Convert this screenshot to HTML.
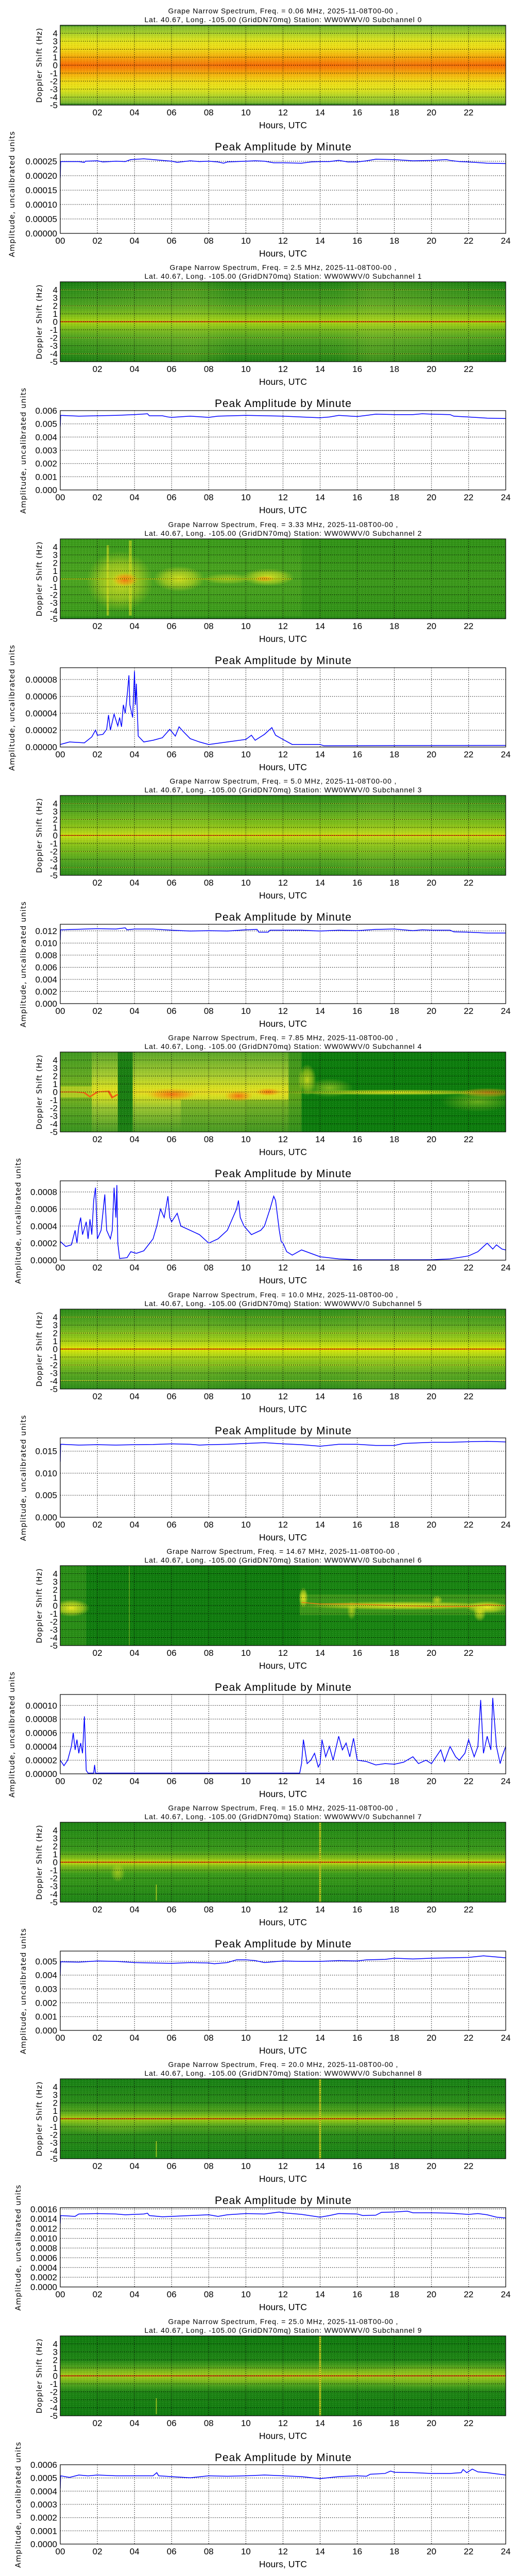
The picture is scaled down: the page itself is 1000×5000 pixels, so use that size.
<!DOCTYPE html>
<html><head><meta charset="utf-8"><style>
html,body{margin:0;padding:0;background:#fff}
body{width:1000px;height:5000px;position:relative;overflow:hidden}
svg.p{position:absolute;left:0}
.t{font-family:"Liberation Sans",sans-serif;font-size:14px;text-anchor:middle;fill:#000}
.k{font-family:"Liberation Sans",sans-serif;font-size:17px;fill:#000}
.e{text-anchor:end}.m{text-anchor:middle}
.h{font-family:"Liberation Sans",sans-serif;font-size:17.5px;text-anchor:middle;fill:#000}
.pa{font-family:"Liberation Sans",sans-serif;font-size:21px;text-anchor:middle;fill:#000}
.yl{font-family:"DejaVu Sans",sans-serif;font-size:14.5px;text-anchor:middle;fill:#000}
.gr{fill:none;stroke:#000;stroke-width:1;stroke-dasharray:1.5 2.5}
.fr{fill:none;stroke:#000;stroke-width:1.2}
.ln{fill:none;stroke:#0000ff;stroke-width:1.5}
</style></head><body>

<svg width="0" height="0" style="position:absolute">
<defs>
<pattern id="nz" width="6" height="4" patternUnits="userSpaceOnUse"><rect width="2" height="1" fill="#000" opacity=".09"/><rect x="3" y="2" width="2" height="1" fill="#fff" opacity=".09"/><rect x="1" y="3" width="1" height="1" fill="#000" opacity=".07"/><rect x="5" y="0" width="1" height="2" fill="#fff" opacity=".05"/></pattern>
<radialGradient id="ry"><stop offset="0" stop-color="#ecea20" stop-opacity="1"/><stop offset=".6" stop-color="#d8e020" stop-opacity=".6"/><stop offset="1" stop-color="#c8d820" stop-opacity="0"/></radialGradient>
<radialGradient id="ro"><stop offset="0" stop-color="#f47010" stop-opacity="1"/><stop offset=".6" stop-color="#f49a10" stop-opacity=".6"/><stop offset="1" stop-color="#f0c010" stop-opacity="0"/></radialGradient>
<radialGradient id="rg"><stop offset="0" stop-color="#8cc020" stop-opacity=".9"/><stop offset="1" stop-color="#8cc020" stop-opacity="0"/></radialGradient>
<linearGradient id="g0" x1="0" y1="0" x2="0" y2="1"><stop offset="0" stop-color="#106e10"/><stop offset=".02" stop-color="#7cb830"/><stop offset=".1" stop-color="#a8d028"/><stop offset=".2" stop-color="#e4e41a"/><stop offset=".3" stop-color="#f0d814"/><stop offset=".4" stop-color="#f6a808"/><stop offset=".5" stop-color="#f86a04"/><stop offset=".6" stop-color="#f6a808"/><stop offset=".7" stop-color="#f0d814"/><stop offset=".8" stop-color="#e4e41a"/><stop offset=".9" stop-color="#a8d028"/><stop offset=".97" stop-color="#7cb830"/><stop offset="1" stop-color="#106e10"/></linearGradient>
<linearGradient id="g1" x1="0" y1="0" x2="0" y2="1"><stop offset="0" stop-color="#157a10"/><stop offset=".1" stop-color="#2a8a18"/><stop offset=".3" stop-color="#4aa020"/><stop offset=".42" stop-color="#7cbc18"/><stop offset=".5" stop-color="#a8d410"/><stop offset=".58" stop-color="#7cbc18"/><stop offset=".7" stop-color="#4aa020"/><stop offset=".9" stop-color="#2a8a18"/><stop offset="1" stop-color="#157a10"/></linearGradient>
<linearGradient id="g2" x1="0" y1="0" x2="0" y2="1"><stop offset="0" stop-color="#3a9a1a"/><stop offset=".5" stop-color="#4ca420"/><stop offset=".96" stop-color="#3a9a1a"/><stop offset="1" stop-color="#1a7a10"/></linearGradient>
<linearGradient id="g3" x1="0" y1="0" x2="0" y2="1"><stop offset="0" stop-color="#2a8a18"/><stop offset=".15" stop-color="#4aa020"/><stop offset=".35" stop-color="#7cbc18"/><stop offset=".45" stop-color="#a8d018"/><stop offset=".5" stop-color="#c8e010"/><stop offset=".55" stop-color="#a8d018"/><stop offset=".65" stop-color="#7cbc18"/><stop offset=".85" stop-color="#4aa020"/><stop offset="1" stop-color="#2a8a18"/></linearGradient>
<linearGradient id="g4" x1="0" y1="0" x2="0" y2="1"><stop offset="0" stop-color="#5aa628"/><stop offset=".3" stop-color="#a8cc30"/><stop offset=".45" stop-color="#d8e020"/><stop offset=".5" stop-color="#e8d820"/><stop offset=".55" stop-color="#d8e020"/><stop offset=".7" stop-color="#98c430"/><stop offset="1" stop-color="#4a9a24"/></linearGradient>
<linearGradient id="g5" x1="0" y1="0" x2="0" y2="1"><stop offset="0" stop-color="#2a8a18"/><stop offset=".2" stop-color="#5aa820"/><stop offset=".35" stop-color="#8cc418"/><stop offset=".45" stop-color="#c0dc10"/><stop offset=".5" stop-color="#e0e800"/><stop offset=".55" stop-color="#c0dc10"/><stop offset=".65" stop-color="#8cc418"/><stop offset=".8" stop-color="#5aa820"/><stop offset="1" stop-color="#2a8a18"/></linearGradient>
<linearGradient id="g7" x1="0" y1="0" x2="0" y2="1"><stop offset="0" stop-color="#1e8414"/><stop offset=".35" stop-color="#3a9a1a"/><stop offset=".45" stop-color="#80bc18"/><stop offset=".5" stop-color="#c8dc10"/><stop offset=".55" stop-color="#80bc18"/><stop offset=".65" stop-color="#3a9a1a"/><stop offset="1" stop-color="#1e8414"/></linearGradient>
<linearGradient id="g8" x1="0" y1="0" x2="0" y2="1"><stop offset="0" stop-color="#178014"/><stop offset=".3" stop-color="#2a8c18"/><stop offset=".42" stop-color="#5aa81c"/><stop offset=".5" stop-color="#a8d010"/><stop offset=".58" stop-color="#5aa81c"/><stop offset=".7" stop-color="#2a8c18"/><stop offset="1" stop-color="#178014"/></linearGradient>
<linearGradient id="g9" x1="0" y1="0" x2="0" y2="1"><stop offset="0" stop-color="#0f7a0e"/><stop offset=".3" stop-color="#1e8414"/><stop offset=".38" stop-color="#4aa01c"/><stop offset=".5" stop-color="#a8cc18"/><stop offset=".62" stop-color="#4aa01c"/><stop offset=".7" stop-color="#1e8414"/><stop offset="1" stop-color="#0f7a0e"/></linearGradient>
<linearGradient id="hb" x1="0" y1="0" x2="1" y2="0"><stop offset="0" stop-color="#d0e040" stop-opacity="0"/><stop offset=".3" stop-color="#d0e040" stop-opacity=".2"/><stop offset=".38" stop-color="#d0e040" stop-opacity=".05"/><stop offset=".62" stop-color="#d0e040" stop-opacity=".05"/><stop offset=".7" stop-color="#d0e040" stop-opacity=".2"/><stop offset="1" stop-color="#d0e040" stop-opacity="0"/></linearGradient>
<path id="sg" d="M189.1 49V204M261.2 49V204M333.2 49V204M405.3 49V204M477.4 49V204M549.5 49V204M621.6 49V204M693.7 49V204M765.7 49V204M837.8 49V204M909.9 49V204M117 64.5H982M117 80H982M117 95.5H982M117 111H982M117 126.5H982M117 142H982M117 157.5H982M117 173H982M117 188.5H982"/>
<path id="lg" d="M189.1 299V453M261.2 299V453M333.2 299V453M405.3 299V453M477.4 299V453M549.5 299V453M621.6 299V453M693.7 299V453M765.7 299V453M837.8 299V453M909.9 299V453"/>
</defs></svg>

<!-- ============ PANEL 0 ============ -->
<svg class="p" style="top:0px" width="1000" height="500">
<text x="549.5" y="26" class="t" textLength="446">Grape Narrow Spectrum, Freq. = 0.06 MHz, 2025-11-08T00-00 ,</text>
<text x="549.5" y="43" class="t" textLength="538">Lat. 40.67, Long. -105.00 (GridDN70mq) Station: WW0WWV/0 Subchannel 0</text>
<svg x="117" y="49" width="865" height="155" viewBox="0 0 24 10" preserveAspectRatio="none">
<rect width="24" height="10" fill="url(#g0)"/>
<rect width="24" height="10" fill="url(#hb)" opacity=".5"/>
</svg>
<rect x="117" y="49" width="865" height="155" fill="url(#nz)"/>
<use href="#sg" class="gr"/>
<rect x="117" y="49" width="865" height="155" class="fr"/>
<g class="k e"><text x="112" y="70.5">4</text><text x="112" y="86">3</text><text x="112" y="101.5">2</text><text x="112" y="117">1</text><text x="112" y="132.5">0</text><text x="112" y="148">-1</text><text x="112" y="163.5">-2</text><text x="112" y="179">-3</text><text x="112" y="194.5">-4</text><text x="112" y="210">-5</text></g>
<g class="k m"><text x="189.1" y="224">02</text><text x="261.2" y="224">04</text><text x="333.2" y="224">06</text><text x="405.3" y="224">08</text><text x="477.4" y="224">10</text><text x="549.5" y="224">12</text><text x="621.6" y="224">14</text><text x="693.7" y="224">16</text><text x="765.7" y="224">18</text><text x="837.8" y="224">20</text><text x="909.9" y="224">22</text></g>
<text x="549.5" y="249" class="h" textLength="93">Hours, UTC</text>
<text class="yl" transform="translate(81,127) rotate(-90)" textLength="145">Doppler Shift (Hz)</text>
<text x="549.5" y="292" class="pa" textLength="265">Peak Amplitude by Minute</text>
<use href="#lg" class="gr"/>
<path class="gr" d="M117 425H982M117 396.9H982M117 369.1H982M117 341H982M117 313H982"/>
<svg x="117" y="299" width="865" height="154" viewBox="0 0 24 100" preserveAspectRatio="none"><polyline class="ln" vector-effect="non-scaling-stroke" points="0,30 0.02,9.5 1,9.5 1.3,10.5 1.35,9 2,8.5 2.3,10 3,9 3.5,9.5 3.8,7 4.5,6 5,7 5.5,8 6,9 6.3,10.5 7,8.5 7.5,9.5 8,9 8.5,10 8.8,11.5 9,10 10,9 10.5,8.5 11,9 11.5,11 12,11 13,11.5 13.5,10 14,9.5 14.5,9.5 15,8 15.5,10 16,10 16.5,8.5 17,6.5 18,7 19,8.5 20,8 20.8,7 21,8 21.5,9.5 22,10 23,11.5 24,12"/></svg>
<rect x="117" y="299" width="865" height="154" class="fr"/>
<g class="k e"><text x="111" y="459">0.00000</text><text x="111" y="431">0.00005</text><text x="111" y="403">0.00010</text><text x="111" y="375">0.00015</text><text x="111" y="347">0.00020</text><text x="111" y="319">0.00025</text></g>
<g class="k m"><text x="117" y="473">00</text><text x="189.1" y="473">02</text><text x="261.2" y="473">04</text><text x="333.2" y="473">06</text><text x="405.3" y="473">08</text><text x="477.4" y="473">10</text><text x="549.5" y="473">12</text><text x="621.6" y="473">14</text><text x="693.7" y="473">16</text><text x="765.7" y="473">18</text><text x="837.8" y="473">20</text><text x="909.9" y="473">22</text><text x="982" y="473">24</text></g>
<text x="549.5" y="498" class="h" textLength="93">Hours, UTC</text>
<text class="yl" transform="translate(28,377) rotate(-90)" textLength="244">Amplitude, uncalibrated units</text>
</svg>

<!-- ============ PANEL 1 ============ -->
<svg class="p" style="top:498px" width="1000" height="500">
<text x="549.5" y="26" class="t" textLength="440">Grape Narrow Spectrum, Freq. = 2.5 MHz, 2025-11-08T00-00 ,</text>
<text x="549.5" y="43" class="t" textLength="538">Lat. 40.67, Long. -105.00 (GridDN70mq) Station: WW0WWV/0 Subchannel 1</text>
<svg x="117" y="49" width="865" height="155" viewBox="0 0 24 10" preserveAspectRatio="none">
<rect width="24" height="10" fill="url(#g1)"/>
<rect width="24" height="10" fill="url(#hb)"/>
<rect x="0" y="0.98" width="24" height="0.07" fill="#c8d830" opacity=".8"/>
<rect x="0" y="2.98" width="24" height="0.07" fill="#c8d830" opacity=".8"/>
<rect x="0" y="6.98" width="24" height="0.07" fill="#c8d830" opacity=".8"/>
<rect x="0" y="8.98" width="24" height="0.07" fill="#c8d830" opacity=".8"/>
<rect x="0" y="4.95" width="24" height="0.1" fill="#ff0000"/>
</svg>
<rect x="117" y="49" width="865" height="155" fill="url(#nz)"/>
<use href="#sg" class="gr"/>
<rect x="117" y="49" width="865" height="155" class="fr"/>
<g class="k e"><text x="112" y="70.5">4</text><text x="112" y="86">3</text><text x="112" y="101.5">2</text><text x="112" y="117">1</text><text x="112" y="132.5">0</text><text x="112" y="148">-1</text><text x="112" y="163.5">-2</text><text x="112" y="179">-3</text><text x="112" y="194.5">-4</text><text x="112" y="210">-5</text></g>
<g class="k m"><text x="189.1" y="224">02</text><text x="261.2" y="224">04</text><text x="333.2" y="224">06</text><text x="405.3" y="224">08</text><text x="477.4" y="224">10</text><text x="549.5" y="224">12</text><text x="621.6" y="224">14</text><text x="693.7" y="224">16</text><text x="765.7" y="224">18</text><text x="837.8" y="224">20</text><text x="909.9" y="224">22</text></g>
<text x="549.5" y="249" class="h" textLength="93">Hours, UTC</text>
<text class="yl" transform="translate(81,127) rotate(-90)" textLength="145">Doppler Shift (Hz)</text>
<text x="549.5" y="292" class="pa" textLength="265">Peak Amplitude by Minute</text>
<use href="#lg" class="gr"/>
<path class="gr" d="M117 427.3H982M117 401.7H982M117 376H982M117 350.3H982M117 324.7H982"/>
<svg x="117" y="299" width="865" height="154" viewBox="0 0 24 100" preserveAspectRatio="none"><polyline class="ln" vector-effect="non-scaling-stroke" points="0,20 0.02,6 1,7 2,6.5 3,6 4,5 4.7,4 4.8,6.5 5.5,6.5 5.8,8 6,8.5 7,7 8,8.5 8.5,7 10,6 12,7 13,8 14,9 14.5,8 15,6 16,7.5 16.5,6 17,4.5 18,5 19,5 19.5,4 20,4.5 21,5 21.2,7 22,8 23,9.5 24,10"/></svg>
<rect x="117" y="299" width="865" height="154" class="fr"/>
<g class="k e"><text x="111" y="459">0.000</text><text x="111" y="433.3">0.001</text><text x="111" y="407.7">0.002</text><text x="111" y="382">0.003</text><text x="111" y="356.3">0.004</text><text x="111" y="330.7">0.005</text><text x="111" y="305">0.006</text></g>
<g class="k m"><text x="117" y="473">00</text><text x="189.1" y="473">02</text><text x="261.2" y="473">04</text><text x="333.2" y="473">06</text><text x="405.3" y="473">08</text><text x="477.4" y="473">10</text><text x="549.5" y="473">12</text><text x="621.6" y="473">14</text><text x="693.7" y="473">16</text><text x="765.7" y="473">18</text><text x="837.8" y="473">20</text><text x="909.9" y="473">22</text><text x="982" y="473">24</text></g>
<text x="549.5" y="498" class="h" textLength="93">Hours, UTC</text>
<text class="yl" transform="translate(50,377) rotate(-90)" textLength="244">Amplitude, uncalibrated units</text>
</svg>

<!-- ============ PANEL 2 ============ -->
<svg class="p" style="top:997px" width="1000" height="500">
<text x="549.5" y="26" class="t" textLength="446">Grape Narrow Spectrum, Freq. = 3.33 MHz, 2025-11-08T00-00 ,</text>
<text x="549.5" y="43" class="t" textLength="538">Lat. 40.67, Long. -105.00 (GridDN70mq) Station: WW0WWV/0 Subchannel 2</text>
<svg x="117" y="49" width="865" height="155" viewBox="0 0 24 10" preserveAspectRatio="none">
<rect width="24" height="10" fill="url(#g2)"/>
<rect x="13" width="11" height="9.7" fill="#1f8410" opacity=".35"/>
<ellipse cx="3.2" cy="5.3" rx="1.8" ry="3.8" fill="url(#ry)" opacity=".8"/>
<ellipse cx="6.4" cy="5" rx="1.4" ry="1.6" fill="url(#ry)" opacity=".85"/>
<ellipse cx="11.2" cy="4.8" rx="1.4" ry="1.1" fill="url(#ry)" opacity=".85"/>
<ellipse cx="9" cy="5" rx="1.4" ry=".7" fill="url(#ry)" opacity=".5"/>
<rect x="2.5" y="0.8" width=".12" height="8.8" fill="#d8e020" opacity=".6"/>
<rect x="3.7" y="0.2" width=".15" height="9.4" fill="#d8e020" opacity=".6"/>
<ellipse cx="3.5" cy="5.1" rx=".7" ry=".9" fill="url(#ro)"/>
<ellipse cx="11" cy="5" rx=".6" ry=".35" fill="url(#ro)" opacity=".8"/>
<rect x="0" y="4.97" width="12.5" height="0.08" fill="#f0e000"/>
</svg>
<rect x="117" y="49" width="865" height="155" fill="url(#nz)"/>
<use href="#sg" class="gr"/>
<rect x="117" y="49" width="865" height="155" class="fr"/>
<g class="k e"><text x="112" y="70.5">4</text><text x="112" y="86">3</text><text x="112" y="101.5">2</text><text x="112" y="117">1</text><text x="112" y="132.5">0</text><text x="112" y="148">-1</text><text x="112" y="163.5">-2</text><text x="112" y="179">-3</text><text x="112" y="194.5">-4</text><text x="112" y="210">-5</text></g>
<g class="k m"><text x="189.1" y="224">02</text><text x="261.2" y="224">04</text><text x="333.2" y="224">06</text><text x="405.3" y="224">08</text><text x="477.4" y="224">10</text><text x="549.5" y="224">12</text><text x="621.6" y="224">14</text><text x="693.7" y="224">16</text><text x="765.7" y="224">18</text><text x="837.8" y="224">20</text><text x="909.9" y="224">22</text></g>
<text x="549.5" y="249" class="h" textLength="93">Hours, UTC</text>
<text class="yl" transform="translate(81,127) rotate(-90)" textLength="145">Doppler Shift (Hz)</text>
<text x="549.5" y="292" class="pa" textLength="265">Peak Amplitude by Minute</text>
<use href="#lg" class="gr"/>
<path class="gr" d="M117 420.2H982M117 387.4H982M117 354.7H982M117 321.9H982"/>
<svg x="117" y="299" width="865" height="154" viewBox="0 0 24 100" preserveAspectRatio="none"><polyline class="ln" vector-effect="non-scaling-stroke" points="0,96.8 0.5,93.6 1.3,94.7 1.7,87.2 1.9,78.7 2,85.1 2.3,84 2.5,77.7 2.6,59.6 2.7,78.7 2.9,58.5 3.1,73.4 3.2,62.8 3.3,74.5 3.4,46.8 3.5,57.4 3.6,36.2 3.7,9.6 3.75,46.8 3.9,62.8 4.0,4.2 4.05,46.8 4.1,20.2 4.2,86.2 4.5,93.6 5,91.5 5.5,88.3 5.9,77.7 6.2,86.2 6.4,74.5 6.6,79.8 7,89.4 7.5,93.6 8,96.8 9,93.6 10,90.4 10.3,85.1 10.5,91.5 11,84 11.4,75.5 11.6,85.1 12,90.4 12.5,96.8 14,96.8 14.2,98.4 24,97.9"/></svg>
<rect x="117" y="299" width="865" height="154" class="fr"/>
<g class="k e"><text x="111" y="459">0.00000</text><text x="111" y="426.2">0.00002</text><text x="111" y="393.4">0.00004</text><text x="111" y="360.7">0.00006</text><text x="111" y="327.9">0.00008</text></g>
<g class="k m"><text x="117" y="473">00</text><text x="189.1" y="473">02</text><text x="261.2" y="473">04</text><text x="333.2" y="473">06</text><text x="405.3" y="473">08</text><text x="477.4" y="473">10</text><text x="549.5" y="473">12</text><text x="621.6" y="473">14</text><text x="693.7" y="473">16</text><text x="765.7" y="473">18</text><text x="837.8" y="473">20</text><text x="909.9" y="473">22</text><text x="982" y="473">24</text></g>
<text x="549.5" y="498" class="h" textLength="93">Hours, UTC</text>
<text class="yl" transform="translate(28,377) rotate(-90)" textLength="244">Amplitude, uncalibrated units</text>
</svg>

<!-- ============ PANEL 3 ============ -->
<svg class="p" style="top:1495px" width="1000" height="500">
<text x="549.5" y="26" class="t" textLength="440">Grape Narrow Spectrum, Freq. = 5.0 MHz, 2025-11-08T00-00 ,</text>
<text x="549.5" y="43" class="t" textLength="538">Lat. 40.67, Long. -105.00 (GridDN70mq) Station: WW0WWV/0 Subchannel 3</text>
<svg x="117" y="49" width="865" height="155" viewBox="0 0 24 10" preserveAspectRatio="none">
<rect width="24" height="10" fill="url(#g3)"/>
<rect width="24" height="10" fill="url(#hb)" opacity=".6"/>
<rect x="0" y="0.98" width="24" height="0.07" fill="#d8e030" opacity=".7"/>
<rect x="0" y="2.98" width="24" height="0.07" fill="#d8e030" opacity=".7"/>
<rect x="0" y="6.98" width="24" height="0.07" fill="#d8e030" opacity=".7"/>
<rect x="0" y="8.98" width="24" height="0.07" fill="#d8e030" opacity=".7"/>
<rect x="0" y="4.96" width="24" height="0.08" fill="#ff0000"/>
</svg>
<rect x="117" y="49" width="865" height="155" fill="url(#nz)"/>
<use href="#sg" class="gr"/>
<rect x="117" y="49" width="865" height="155" class="fr"/>
<g class="k e"><text x="112" y="70.5">4</text><text x="112" y="86">3</text><text x="112" y="101.5">2</text><text x="112" y="117">1</text><text x="112" y="132.5">0</text><text x="112" y="148">-1</text><text x="112" y="163.5">-2</text><text x="112" y="179">-3</text><text x="112" y="194.5">-4</text><text x="112" y="210">-5</text></g>
<g class="k m"><text x="189.1" y="224">02</text><text x="261.2" y="224">04</text><text x="333.2" y="224">06</text><text x="405.3" y="224">08</text><text x="477.4" y="224">10</text><text x="549.5" y="224">12</text><text x="621.6" y="224">14</text><text x="693.7" y="224">16</text><text x="765.7" y="224">18</text><text x="837.8" y="224">20</text><text x="909.9" y="224">22</text></g>
<text x="549.5" y="249" class="h" textLength="93">Hours, UTC</text>
<text class="yl" transform="translate(81,127) rotate(-90)" textLength="145">Doppler Shift (Hz)</text>
<text x="549.5" y="292" class="pa" textLength="265">Peak Amplitude by Minute</text>
<use href="#lg" class="gr"/>
<path class="gr" d="M117 429.4H982M117 406H982M117 382.5H982M117 358.9H982M117 335.5H982M117 311.9H982"/>
<svg x="117" y="299" width="865" height="154" viewBox="0 0 24 100" preserveAspectRatio="none"><polyline class="ln" vector-effect="non-scaling-stroke" points="0,20 0.02,7 2,5.5 3,6 3.5,4.5 3.6,7 4,6 5,6 6,7.5 7,8.5 8,8 9,8.5 10,7 10.6,6.5 10.7,10 11.2,10 11.3,7.5 12,7.5 13,7.5 14,8.5 15,7.5 16,8 17,6.5 18,6 19,8 19.5,7 20,7.5 21,7.5 21.2,9.5 22,10 23,11 24,11"/></svg>
<rect x="117" y="299" width="865" height="154" class="fr"/>
<g class="k e"><text x="111" y="459">0.000</text><text x="111" y="435.4">0.002</text><text x="111" y="412">0.004</text><text x="111" y="388.5">0.006</text><text x="111" y="364.9">0.008</text><text x="111" y="341.5">0.010</text><text x="111" y="317.9">0.012</text></g>
<g class="k m"><text x="117" y="473">00</text><text x="189.1" y="473">02</text><text x="261.2" y="473">04</text><text x="333.2" y="473">06</text><text x="405.3" y="473">08</text><text x="477.4" y="473">10</text><text x="549.5" y="473">12</text><text x="621.6" y="473">14</text><text x="693.7" y="473">16</text><text x="765.7" y="473">18</text><text x="837.8" y="473">20</text><text x="909.9" y="473">22</text><text x="982" y="473">24</text></g>
<text x="549.5" y="498" class="h" textLength="93">Hours, UTC</text>
<text class="yl" transform="translate(50,377) rotate(-90)" textLength="244">Amplitude, uncalibrated units</text>
</svg>

<!-- ============ PANEL 4 ============ -->
<svg class="p" style="top:1993px" width="1000" height="500">
<text x="549.5" y="26" class="t" textLength="446">Grape Narrow Spectrum, Freq. = 7.85 MHz, 2025-11-08T00-00 ,</text>
<text x="549.5" y="43" class="t" textLength="538">Lat. 40.67, Long. -105.00 (GridDN70mq) Station: WW0WWV/0 Subchannel 4</text>
<svg x="117" y="49" width="865" height="155" viewBox="0 0 24 10" preserveAspectRatio="none">
<rect width="24" height="10" fill="#0c7c0c"/>
<rect x="0" width="13" height="10" fill="url(#g4)"/>
<rect x="0" width="1.7" height="10" fill="#2a8c18" opacity=".55"/>
<rect x="0" y="4.3" width="1.7" height="1.4" fill="#d0dc28" opacity=".6"/>
<rect x="3.1" width=".8" height="10" fill="#1a7e12"/>
<rect x="6.5" y="6" width="3.5" height="4" fill="#4a9a20" opacity=".45"/>
<rect x="10" y="6" width="2.3" height="4" fill="#3a9018" opacity=".45"/>
<rect x="12.3" width=".7" height="10" fill="#2a8a14" opacity=".7"/>
<ellipse cx="6" cy="5.3" rx="1.4" ry=".8" fill="url(#ro)"/>
<ellipse cx="9.6" cy="5.5" rx=".8" ry=".7" fill="url(#ro)"/>
<ellipse cx="11.2" cy="5" rx=".7" ry=".5" fill="url(#ro)"/>
<polyline points="0,5 0.8,5 1.3,5.1 1.6,5.6 2,5 2.6,4.9 2.8,5.7 3.1,5.3" fill="none" stroke="#f06010" stroke-width=".12"/>
<ellipse cx="18" cy="5.05" rx="6.5" ry=".35" fill="url(#ry)"/>
<ellipse cx="23" cy="5.1" rx="1.6" ry=".6" fill="url(#ro)" opacity=".7"/>
<ellipse cx="22.5" cy="6.2" rx="2" ry="1.3" fill="url(#rg)" opacity=".8"/>
<ellipse cx="13.3" cy="3.5" rx=".5" ry="2" fill="url(#ry)" opacity=".8"/>
<ellipse cx="14.5" cy="4.5" rx="1.3" ry="1.2" fill="url(#rg)"/>
</svg>
<rect x="117" y="49" width="865" height="155" fill="url(#nz)"/>
<use href="#sg" class="gr"/>
<rect x="117" y="49" width="865" height="155" class="fr"/>
<g class="k e"><text x="112" y="70.5">4</text><text x="112" y="86">3</text><text x="112" y="101.5">2</text><text x="112" y="117">1</text><text x="112" y="132.5">0</text><text x="112" y="148">-1</text><text x="112" y="163.5">-2</text><text x="112" y="179">-3</text><text x="112" y="194.5">-4</text><text x="112" y="210">-5</text></g>
<g class="k m"><text x="189.1" y="224">02</text><text x="261.2" y="224">04</text><text x="333.2" y="224">06</text><text x="405.3" y="224">08</text><text x="477.4" y="224">10</text><text x="549.5" y="224">12</text><text x="621.6" y="224">14</text><text x="693.7" y="224">16</text><text x="765.7" y="224">18</text><text x="837.8" y="224">20</text><text x="909.9" y="224">22</text></g>
<text x="549.5" y="249" class="h" textLength="93">Hours, UTC</text>
<text class="yl" transform="translate(81,127) rotate(-90)" textLength="145">Doppler Shift (Hz)</text>
<text x="549.5" y="292" class="pa" textLength="265">Peak Amplitude by Minute</text>
<use href="#lg" class="gr"/>
<path class="gr" d="M117 419.9H982M117 386.8H982M117 353.7H982M117 320.6H982"/>
<svg x="117" y="299" width="865" height="154" viewBox="0 0 24 100" preserveAspectRatio="none"><polyline class="ln" vector-effect="non-scaling-stroke" points="0,76.4 0.3,82.8 0.6,80.7 0.8,62.4 0.9,78.5 1,57 1.1,46.3 1.2,67.8 1.4,51.6 1.5,73.1 1.6,48.4 1.7,67.8 1.8,24.8 1.9,8.6 2,73.1 2.2,62.4 2.4,17.2 2.5,62.4 2.7,73.1 2.8,62.4 2.9,8.6 3.0,46.3 3.05,5.4 3.1,78.5 3.2,97.9 3.6,96.8 3.8,89.3 4.1,91.4 4.5,88.2 5,73.1 5.2,57 5.4,35.5 5.6,46.3 5.8,19.4 5.9,46.3 6,51.6 6.3,40.9 6.5,57 7,62.4 7.5,67.8 8,78.5 8.5,73.1 9,62.4 9.5,35.5 9.6,24.8 9.7,46.3 9.9,57 10.3,67.8 10.8,62.4 11,57 11.3,35.5 11.5,19.4 11.6,24.8 11.8,62.4 11.9,76.4 12,78.5 12.2,89.3 12.5,93.6 13,87.1 13.5,91.4 14,95.7 15,98.4 16,99.5 20,99.5 21,98.4 22,94.6 22.5,89.3 23,78.5 23.3,86 23.5,80.7 23.8,86 24,87.1"/></svg>
<rect x="117" y="299" width="865" height="154" class="fr"/>
<g class="k e"><text x="111" y="459">0.0000</text><text x="111" y="425.9">0.0002</text><text x="111" y="392.8">0.0004</text><text x="111" y="359.7">0.0006</text><text x="111" y="326.6">0.0008</text></g>
<g class="k m"><text x="117" y="473">00</text><text x="189.1" y="473">02</text><text x="261.2" y="473">04</text><text x="333.2" y="473">06</text><text x="405.3" y="473">08</text><text x="477.4" y="473">10</text><text x="549.5" y="473">12</text><text x="621.6" y="473">14</text><text x="693.7" y="473">16</text><text x="765.7" y="473">18</text><text x="837.8" y="473">20</text><text x="909.9" y="473">22</text><text x="982" y="473">24</text></g>
<text x="549.5" y="498" class="h" textLength="93">Hours, UTC</text>
<text class="yl" transform="translate(40,377) rotate(-90)" textLength="244">Amplitude, uncalibrated units</text>
</svg>

<!-- ============ PANEL 5 ============ -->
<svg class="p" style="top:2492px" width="1000" height="500">
<text x="549.5" y="26" class="t" textLength="446">Grape Narrow Spectrum, Freq. = 10.0 MHz, 2025-11-08T00-00 ,</text>
<text x="549.5" y="43" class="t" textLength="538">Lat. 40.67, Long. -105.00 (GridDN70mq) Station: WW0WWV/0 Subchannel 5</text>
<svg x="117" y="49" width="865" height="155" viewBox="0 0 24 10" preserveAspectRatio="none">
<rect width="24" height="10" fill="url(#g5)"/>
<rect width="24" height="10" fill="url(#hb)" opacity=".5"/>
<rect x="0" y="0.96" width="24" height="0.08" fill="#e0e830" opacity=".8"/>
<rect x="0" y="2.96" width="24" height="0.08" fill="#e0e830" opacity=".9"/>
<rect x="0" y="6.96" width="24" height="0.08" fill="#e0e830" opacity=".9"/>
<rect x="0" y="8.9" width="24" height="0.08" fill="#e0e830" opacity=".8"/>
<rect x="0" y="4.95" width="24" height="0.1" fill="#ff0000"/>
</svg>
<rect x="117" y="49" width="865" height="155" fill="url(#nz)"/>
<use href="#sg" class="gr"/>
<rect x="117" y="49" width="865" height="155" class="fr"/>
<g class="k e"><text x="112" y="70.5">4</text><text x="112" y="86">3</text><text x="112" y="101.5">2</text><text x="112" y="117">1</text><text x="112" y="132.5">0</text><text x="112" y="148">-1</text><text x="112" y="163.5">-2</text><text x="112" y="179">-3</text><text x="112" y="194.5">-4</text><text x="112" y="210">-5</text></g>
<g class="k m"><text x="189.1" y="224">02</text><text x="261.2" y="224">04</text><text x="333.2" y="224">06</text><text x="405.3" y="224">08</text><text x="477.4" y="224">10</text><text x="549.5" y="224">12</text><text x="621.6" y="224">14</text><text x="693.7" y="224">16</text><text x="765.7" y="224">18</text><text x="837.8" y="224">20</text><text x="909.9" y="224">22</text></g>
<text x="549.5" y="249" class="h" textLength="93">Hours, UTC</text>
<text class="yl" transform="translate(81,127) rotate(-90)" textLength="145">Doppler Shift (Hz)</text>
<text x="549.5" y="292" class="pa" textLength="265">Peak Amplitude by Minute</text>
<use href="#lg" class="gr"/>
<path class="gr" d="M117 410.2H982M117 367.4H982M117 324.7H982"/>
<svg x="117" y="299" width="865" height="154" viewBox="0 0 24 100" preserveAspectRatio="none"><polyline class="ln" vector-effect="non-scaling-stroke" points="0,30 0.02,8 1,9 2,8.5 3,9 4,8.5 5,8.3 6,7.5 7,8 7.5,9 8,8.5 9,8 10,7 11,6 12,7.5 13,8.5 14,10.5 15,8 16,8 17,9.5 18,9.5 18.5,7 19,6.5 20,5.5 21,5.5 22,4.8 23,4.3 24,5"/></svg>
<rect x="117" y="299" width="865" height="154" class="fr"/>
<g class="k e"><text x="111" y="459">0.000</text><text x="111" y="416.2">0.005</text><text x="111" y="373.4">0.010</text><text x="111" y="330.7">0.015</text></g>
<g class="k m"><text x="117" y="473">00</text><text x="189.1" y="473">02</text><text x="261.2" y="473">04</text><text x="333.2" y="473">06</text><text x="405.3" y="473">08</text><text x="477.4" y="473">10</text><text x="549.5" y="473">12</text><text x="621.6" y="473">14</text><text x="693.7" y="473">16</text><text x="765.7" y="473">18</text><text x="837.8" y="473">20</text><text x="909.9" y="473">22</text><text x="982" y="473">24</text></g>
<text x="549.5" y="498" class="h" textLength="93">Hours, UTC</text>
<text class="yl" transform="translate(50,377) rotate(-90)" textLength="244">Amplitude, uncalibrated units</text>
</svg>

<!-- ============ PANEL 6 ============ -->
<svg class="p" style="top:2990px" width="1000" height="500">
<text x="549.5" y="26" class="t" textLength="452">Grape Narrow Spectrum, Freq. = 14.67 MHz, 2025-11-08T00-00 ,</text>
<text x="549.5" y="43" class="t" textLength="538">Lat. 40.67, Long. -105.00 (GridDN70mq) Station: WW0WWV/0 Subchannel 6</text>
<svg x="117" y="49" width="865" height="155" viewBox="0 0 24 10" preserveAspectRatio="none">
<rect width="24" height="10" fill="#107c0e"/>
<rect x="0" width="1.4" height="10" fill="#3a9a1c" opacity=".6"/>
<ellipse cx=".6" cy="5.3" rx="1" ry="1.1" fill="url(#ry)"/>
<rect x="12.9" y="0" width="11.1" height="10" fill="#1e8a14" opacity=".6"/>
<rect x="12.9" y="3.6" width="11.1" height="2.6" fill="#5aa820" opacity=".55"/>
<ellipse cx="18.5" cy="5" rx="5.8" ry=".55" fill="url(#ry)"/>
<ellipse cx="23" cy="5.2" rx="1.2" ry=".8" fill="url(#ry)"/>
<ellipse cx="13.1" cy="4" rx=".25" ry="1.3" fill="url(#ry)"/>
<ellipse cx="22.6" cy="5.9" rx=".35" ry="1.1" fill="url(#ry)" opacity=".8"/>
<ellipse cx="15.7" cy="5.6" rx=".25" ry="1.2" fill="url(#ry)" opacity=".6"/>
<ellipse cx="20.3" cy="4.3" rx=".3" ry=".6" fill="url(#ry)" opacity=".7"/>
<polyline points="13,4.6 14,4.8 16,4.8 18,5 20,5.1 22,5.1 23,4.9 24,5" fill="none" stroke="#f08010" stroke-width=".1"/>
<rect x="3.7" width=".05" height="10" fill="#c8d830" opacity=".4"/>
</svg>
<rect x="117" y="49" width="865" height="155" fill="url(#nz)"/>
<use href="#sg" class="gr"/>
<rect x="117" y="49" width="865" height="155" class="fr"/>
<g class="k e"><text x="112" y="70.5">4</text><text x="112" y="86">3</text><text x="112" y="101.5">2</text><text x="112" y="117">1</text><text x="112" y="132.5">0</text><text x="112" y="148">-1</text><text x="112" y="163.5">-2</text><text x="112" y="179">-3</text><text x="112" y="194.5">-4</text><text x="112" y="210">-5</text></g>
<g class="k m"><text x="189.1" y="224">02</text><text x="261.2" y="224">04</text><text x="333.2" y="224">06</text><text x="405.3" y="224">08</text><text x="477.4" y="224">10</text><text x="549.5" y="224">12</text><text x="621.6" y="224">14</text><text x="693.7" y="224">16</text><text x="765.7" y="224">18</text><text x="837.8" y="224">20</text><text x="909.9" y="224">22</text></g>
<text x="549.5" y="249" class="h" textLength="93">Hours, UTC</text>
<text class="yl" transform="translate(81,127) rotate(-90)" textLength="145">Doppler Shift (Hz)</text>
<text x="549.5" y="292" class="pa" textLength="265">Peak Amplitude by Minute</text>
<use href="#lg" class="gr"/>
<path class="gr" d="M117 426.5H982M117 399.9H982M117 373.4H982M117 346.7H982M117 320.3H982"/>
<svg x="117" y="299" width="865" height="154" viewBox="0 0 24 100" preserveAspectRatio="none"><polyline class="ln" vector-effect="non-scaling-stroke" points="0,82.8 0.2,89.7 0.4,82.8 0.5,74.1 0.6,65.5 0.7,48.3 0.8,69.8 0.9,56.9 1.0,74.1 1.1,61.2 1.2,74.1 1.3,27.6 1.4,95.7 1.5,99.1 1.8,99.1 1.85,88.8 1.9,99.1 12.9,99.1 13,87.1 13.1,56.9 13.3,87.1 13.5,82.8 13.7,74.1 13.9,91.4 14,87.1 14.1,56.9 14.3,78.5 14.5,65.5 14.7,82.8 15,52.6 15.2,69.8 15.4,61.2 15.6,78.5 15.8,55.2 16,82.8 16.5,84.5 17,88.8 17.5,87.1 18,87.9 18.5,85.3 19,78.5 19.3,87.1 19.7,82.8 20,87.1 20.5,69.8 20.7,84.5 21,65.5 21.3,78.5 21.5,82.8 21.8,74.1 22,56.9 22.3,78.5 22.5,65.5 22.65,6.9 22.8,74.1 23,52.6 23.2,69.8 23.3,4.3 23.4,35.3 23.5,65.5 23.7,87.1 23.8,78.5 24,65.5"/></svg>
<rect x="117" y="299" width="865" height="154" class="fr"/>
<g class="k e"><text x="111" y="459">0.00000</text><text x="111" y="432.5">0.00002</text><text x="111" y="405.9">0.00004</text><text x="111" y="379.4">0.00006</text><text x="111" y="352.7">0.00008</text><text x="111" y="326.3">0.00010</text></g>
<g class="k m"><text x="117" y="473">00</text><text x="189.1" y="473">02</text><text x="261.2" y="473">04</text><text x="333.2" y="473">06</text><text x="405.3" y="473">08</text><text x="477.4" y="473">10</text><text x="549.5" y="473">12</text><text x="621.6" y="473">14</text><text x="693.7" y="473">16</text><text x="765.7" y="473">18</text><text x="837.8" y="473">20</text><text x="909.9" y="473">22</text><text x="982" y="473">24</text></g>
<text x="549.5" y="498" class="h" textLength="93">Hours, UTC</text>
<text class="yl" transform="translate(28,377) rotate(-90)" textLength="244">Amplitude, uncalibrated units</text>
</svg>

<!-- ============ PANEL 7 ============ -->
<svg class="p" style="top:3488px" width="1000" height="500">
<text x="549.5" y="26" class="t" textLength="446">Grape Narrow Spectrum, Freq. = 15.0 MHz, 2025-11-08T00-00 ,</text>
<text x="549.5" y="43" class="t" textLength="538">Lat. 40.67, Long. -105.00 (GridDN70mq) Station: WW0WWV/0 Subchannel 7</text>
<svg x="117" y="49" width="865" height="155" viewBox="0 0 24 10" preserveAspectRatio="none">
<rect width="24" height="10" fill="url(#g7)"/>
<ellipse cx="3.1" cy="6.3" rx=".4" ry="1.2" fill="url(#ry)" opacity=".5"/>
<rect x="13.95" width=".1" height="10" fill="#d8e020" opacity=".85"/>
<rect x="5.15" y="7.8" width=".05" height="2" fill="#d8e020" opacity=".7"/>
<rect x="0" y="4.95" width="24" height="0.1" fill="#ff0000"/>
</svg>
<rect x="117" y="49" width="865" height="155" fill="url(#nz)"/>
<use href="#sg" class="gr"/>
<rect x="117" y="49" width="865" height="155" class="fr"/>
<g class="k e"><text x="112" y="70.5">4</text><text x="112" y="86">3</text><text x="112" y="101.5">2</text><text x="112" y="117">1</text><text x="112" y="132.5">0</text><text x="112" y="148">-1</text><text x="112" y="163.5">-2</text><text x="112" y="179">-3</text><text x="112" y="194.5">-4</text><text x="112" y="210">-5</text></g>
<g class="k m"><text x="189.1" y="224">02</text><text x="261.2" y="224">04</text><text x="333.2" y="224">06</text><text x="405.3" y="224">08</text><text x="477.4" y="224">10</text><text x="549.5" y="224">12</text><text x="621.6" y="224">14</text><text x="693.7" y="224">16</text><text x="765.7" y="224">18</text><text x="837.8" y="224">20</text><text x="909.9" y="224">22</text></g>
<text x="549.5" y="249" class="h" textLength="93">Hours, UTC</text>
<text class="yl" transform="translate(81,127) rotate(-90)" textLength="145">Doppler Shift (Hz)</text>
<text x="549.5" y="292" class="pa" textLength="265">Peak Amplitude by Minute</text>
<use href="#lg" class="gr"/>
<path class="gr" d="M117 426.2H982M117 399.4H982M117 372.5H982M117 345.7H982M117 318.9H982"/>
<svg x="117" y="299" width="865" height="154" viewBox="0 0 24 100" preserveAspectRatio="none"><polyline class="ln" vector-effect="non-scaling-stroke" points="0,30 0.02,13.5 1,14 2,12.5 3,13 4,14.5 5,15 6,15.5 7,14.5 8,15 8.3,16 9,14.5 9.5,11 10,11 10.5,12 11,14.5 12,12.5 13,13 14,13 15,12 16,12.5 16.5,11 17.5,10.5 18,9 19,10 20,9 21,8.5 22,8 22.8,6 23.5,7.5 24,8.5"/></svg>
<rect x="117" y="299" width="865" height="154" class="fr"/>
<g class="k e"><text x="111" y="459">0.000</text><text x="111" y="432.2">0.001</text><text x="111" y="405.4">0.002</text><text x="111" y="378.5">0.003</text><text x="111" y="351.7">0.004</text><text x="111" y="324.9">0.005</text></g>
<g class="k m"><text x="117" y="473">00</text><text x="189.1" y="473">02</text><text x="261.2" y="473">04</text><text x="333.2" y="473">06</text><text x="405.3" y="473">08</text><text x="477.4" y="473">10</text><text x="549.5" y="473">12</text><text x="621.6" y="473">14</text><text x="693.7" y="473">16</text><text x="765.7" y="473">18</text><text x="837.8" y="473">20</text><text x="909.9" y="473">22</text><text x="982" y="473">24</text></g>
<text x="549.5" y="498" class="h" textLength="93">Hours, UTC</text>
<text class="yl" transform="translate(50,377) rotate(-90)" textLength="244">Amplitude, uncalibrated units</text>
</svg>

<!-- ============ PANEL 8 ============ -->
<svg class="p" style="top:3986px" width="1000" height="500">
<text x="549.5" y="26" class="t" textLength="446">Grape Narrow Spectrum, Freq. = 20.0 MHz, 2025-11-08T00-00 ,</text>
<text x="549.5" y="43" class="t" textLength="538">Lat. 40.67, Long. -105.00 (GridDN70mq) Station: WW0WWV/0 Subchannel 8</text>
<svg x="117" y="49" width="865" height="155" viewBox="0 0 24 10" preserveAspectRatio="none">
<rect width="24" height="10" fill="url(#g8)"/>
<ellipse cx="20" cy="4.6" rx="4" ry="1.3" fill="url(#rg)" opacity=".7"/>
<ellipse cx="3" cy="5.6" rx="3" ry="1.5" fill="url(#rg)" opacity=".5"/>
<rect x="13.95" width=".1" height="10" fill="#d8e020" opacity=".85"/>
<rect x="5.15" y="7.8" width=".05" height="2" fill="#d8e020" opacity=".7"/>
<rect x="0" y="4.95" width="24" height="0.1" fill="#ff0000"/>
</svg>
<rect x="117" y="49" width="865" height="155" fill="url(#nz)"/>
<use href="#sg" class="gr"/>
<rect x="117" y="49" width="865" height="155" class="fr"/>
<g class="k e"><text x="112" y="70.5">4</text><text x="112" y="86">3</text><text x="112" y="101.5">2</text><text x="112" y="117">1</text><text x="112" y="132.5">0</text><text x="112" y="148">-1</text><text x="112" y="163.5">-2</text><text x="112" y="179">-3</text><text x="112" y="194.5">-4</text><text x="112" y="210">-5</text></g>
<g class="k m"><text x="189.1" y="224">02</text><text x="261.2" y="224">04</text><text x="333.2" y="224">06</text><text x="405.3" y="224">08</text><text x="477.4" y="224">10</text><text x="549.5" y="224">12</text><text x="621.6" y="224">14</text><text x="693.7" y="224">16</text><text x="765.7" y="224">18</text><text x="837.8" y="224">20</text><text x="909.9" y="224">22</text></g>
<text x="549.5" y="249" class="h" textLength="93">Hours, UTC</text>
<text class="yl" transform="translate(81,127) rotate(-90)" textLength="145">Doppler Shift (Hz)</text>
<text x="549.5" y="292" class="pa" textLength="265">Peak Amplitude by Minute</text>
<use href="#lg" class="gr"/>
<path class="gr" d="M117 434.1H982M117 415.3H982M117 396.3H982M117 377.4H982M117 358.6H982M117 339.7H982M117 320.7H982M117 301.8H982"/>
<svg x="117" y="299" width="865" height="154" viewBox="0 0 24 100" preserveAspectRatio="none"><polyline class="ln" vector-effect="non-scaling-stroke" points="0,20 0.02,10 0.8,11 1,8 2,7.5 3,8 3.5,9 4.5,8 4.7,7 4.8,10 5.5,11.5 6,11 7,10 8,9 8.5,11 9,9 10,7.5 11,8 11.8,5.5 12,6.5 13,8.5 14,12 14.5,10 15,7.5 16,8 16.3,10 17,9.5 17.3,6 18,5.5 18.7,4.5 19,6.5 20,6.5 21,7 22,8.5 22.5,7.5 23,9 23.5,12 24,13"/></svg>
<rect x="117" y="299" width="865" height="154" class="fr"/>
<g class="k e"><text x="111" y="459">0.0000</text><text x="111" y="440.1">0.0002</text><text x="111" y="421.3">0.0004</text><text x="111" y="402.3">0.0006</text><text x="111" y="383.4">0.0008</text><text x="111" y="364.6">0.0010</text><text x="111" y="345.7">0.0012</text><text x="111" y="326.7">0.0014</text><text x="111" y="307.8">0.0016</text></g>
<g class="k m"><text x="117" y="473">00</text><text x="189.1" y="473">02</text><text x="261.2" y="473">04</text><text x="333.2" y="473">06</text><text x="405.3" y="473">08</text><text x="477.4" y="473">10</text><text x="549.5" y="473">12</text><text x="621.6" y="473">14</text><text x="693.7" y="473">16</text><text x="765.7" y="473">18</text><text x="837.8" y="473">20</text><text x="909.9" y="473">22</text><text x="982" y="473">24</text></g>
<text x="549.5" y="498" class="h" textLength="93">Hours, UTC</text>
<text class="yl" transform="translate(40,377) rotate(-90)" textLength="244">Amplitude, uncalibrated units</text>
</svg>

<!-- ============ PANEL 9 ============ -->
<svg class="p" style="top:4485px" width="1000" height="515">
<text x="549.5" y="26" class="t" textLength="446">Grape Narrow Spectrum, Freq. = 25.0 MHz, 2025-11-08T00-00 ,</text>
<text x="549.5" y="43" class="t" textLength="538">Lat. 40.67, Long. -105.00 (GridDN70mq) Station: WW0WWV/0 Subchannel 9</text>
<svg x="117" y="49" width="865" height="155" viewBox="0 0 24 10" preserveAspectRatio="none">
<rect width="24" height="10" fill="url(#g9)"/>
<ellipse cx="9" cy="5" rx="3.5" ry="1.3" fill="url(#rg)" opacity=".8"/>
<ellipse cx="20" cy="5" rx="4.5" ry="1.5" fill="url(#rg)" opacity=".7"/>
<ellipse cx="2.5" cy="5" rx="2.5" ry="1" fill="url(#rg)" opacity=".5"/>
<rect x="13.95" width=".1" height="10" fill="#d8e020" opacity=".85"/>
<rect x="5.15" y="7.8" width=".05" height="2" fill="#d8e020" opacity=".7"/>
<rect x="0" y="4.95" width="24" height="0.1" fill="#ff0000"/>
</svg>
<rect x="117" y="49" width="865" height="155" fill="url(#nz)"/>
<use href="#sg" class="gr"/>
<rect x="117" y="49" width="865" height="155" class="fr"/>
<g class="k e"><text x="112" y="70.5">4</text><text x="112" y="86">3</text><text x="112" y="101.5">2</text><text x="112" y="117">1</text><text x="112" y="132.5">0</text><text x="112" y="148">-1</text><text x="112" y="163.5">-2</text><text x="112" y="179">-3</text><text x="112" y="194.5">-4</text><text x="112" y="210">-5</text></g>
<g class="k m"><text x="189.1" y="224">02</text><text x="261.2" y="224">04</text><text x="333.2" y="224">06</text><text x="405.3" y="224">08</text><text x="477.4" y="224">10</text><text x="549.5" y="224">12</text><text x="621.6" y="224">14</text><text x="693.7" y="224">16</text><text x="765.7" y="224">18</text><text x="837.8" y="224">20</text><text x="909.9" y="224">22</text></g>
<text x="549.5" y="249" class="h" textLength="93">Hours, UTC</text>
<text class="yl" transform="translate(81,127) rotate(-90)" textLength="145">Doppler Shift (Hz)</text>
<text x="549.5" y="292" class="pa" textLength="265">Peak Amplitude by Minute</text>
<use href="#lg" class="gr"/>
<path class="gr" d="M117 427.3H982M117 401.7H982M117 376H982M117 350.3H982M117 324.7H982"/>
<svg x="117" y="299" width="865" height="154" viewBox="0 0 24 100" preserveAspectRatio="none"><polyline class="ln" vector-effect="non-scaling-stroke" points="0,30 0.02,14 0.5,16 1,13 1.5,14 2,13 3,14 4,14 5,14 5.2,10 5.3,14 6,15 7,16.5 8,14 9,14.5 10,14 11,13 12,14 13,15 14,17.5 15,15 16,14 16.5,14.5 16.7,12 17.5,11 17.8,8 18,9.5 19,10 20,11 21,11 21.6,10 21.7,6 21.9,10 22.2,5.5 22.5,9 23,10 24,13"/></svg>
<rect x="117" y="299" width="865" height="154" class="fr"/>
<g class="k e"><text x="111" y="459">0.0000</text><text x="111" y="433.3">0.0001</text><text x="111" y="407.7">0.0002</text><text x="111" y="382">0.0003</text><text x="111" y="356.3">0.0004</text><text x="111" y="330.7">0.0005</text><text x="111" y="305">0.0006</text></g>
<g class="k m"><text x="117" y="473">00</text><text x="189.1" y="473">02</text><text x="261.2" y="473">04</text><text x="333.2" y="473">06</text><text x="405.3" y="473">08</text><text x="477.4" y="473">10</text><text x="549.5" y="473">12</text><text x="621.6" y="473">14</text><text x="693.7" y="473">16</text><text x="765.7" y="473">18</text><text x="837.8" y="473">20</text><text x="909.9" y="473">22</text><text x="982" y="473">24</text></g>
<text x="549.5" y="498" class="h" textLength="93">Hours, UTC</text>
<text class="yl" transform="translate(40,377) rotate(-90)" textLength="244">Amplitude, uncalibrated units</text>
</svg>

</body></html>
